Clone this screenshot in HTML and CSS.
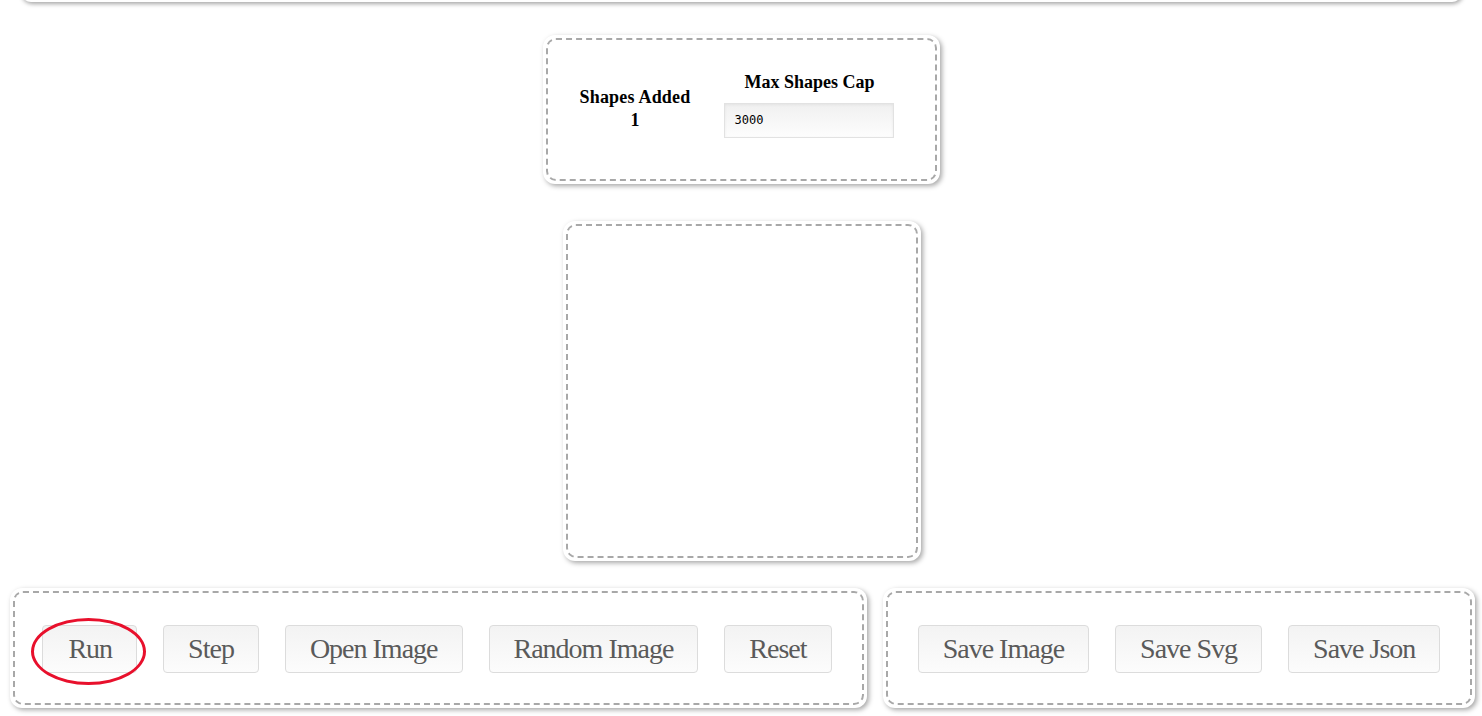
FILE: index.html
```html
<!DOCTYPE html>
<html>
<head>
<meta charset="utf-8">
<title>Shapes</title>
<link rel="stylesheet" href="styles.css">
</head>
<body>
<div class="top-panel"></div>

<div class="card stats-card">
  <div class="dash stats-inner">
    <div class="stat">
      <div class="stat-title">Shapes Added</div>
      <div class="stat-value">1</div>
    </div>
    <div class="stat cap">
      <div class="stat-title">Max Shapes Cap</div>
      <input class="cap-input" type="text" value="3000">
    </div>
  </div>
</div>

<div class="card canvas-card">
  <div class="dash canvas-inner"></div>
</div>

<div class="bottom-row">
  <div class="card controls-card">
    <div class="dash btn-row">
      <button class="btn run">Run</button>
      <button class="btn">Step</button>
      <button class="btn">Open Image</button>
      <button class="btn">Random Image</button>
      <button class="btn">Reset</button>
    </div>
  </div>
  <div class="card save-card">
    <div class="dash btn-row">
      <button class="btn">Save Image</button>
      <button class="btn">Save Svg</button>
      <button class="btn">Save Json</button>
    </div>
  </div>
</div>
</body>
</html>
```

FILE: styles.css
```css
html, body {
  margin: 0;
  padding: 0;
  background: #fff;
  overflow: hidden;
}

body {
  width: 1482px;
  height: 716px;
  font-family: "Liberation Serif", "Times New Roman", serif;
}

.top-panel {
  height: 40px;
  margin: -38px 20px 0 21px;
  background: #fff;
  border-radius: 10px;
  box-shadow: 1px 2px 4px rgba(0, 0, 0, 0.35);
}

.card {
  background: #fff;
  border-radius: 12px;
  padding: 3px;
  box-shadow: 2px 2px 5px rgba(0, 0, 0, 0.35);
  box-sizing: border-box;
}

.dash {
  border: 2px dashed #a8a8a8;
  border-radius: 10px;
  box-sizing: border-box;
  height: 100%;
}

.stats-card {
  width: 397px;
  height: 149px;
  margin: 33px auto 0;
}

.stats-inner {
  display: flex;
  align-items: center;
  padding-left: 32px;
  padding-bottom: 8px;
  gap: 34px;
}

.stat {
  display: flex;
  flex-direction: column;
  align-items: center;
  font-weight: bold;
  font-size: 18px;
  line-height: 23px;
  color: #000;
}

.stat:first-child {
  padding-top: 6px;
  letter-spacing: 0.2px;
}

.stat.cap {
  padding-bottom: 3px;
}

.stat-title {
  white-space: nowrap;
}

.cap-input {
  margin-top: 9px;
  width: 170px;
  height: 35px;
  box-sizing: border-box;
  border: 1px solid #e2e2e2;
  background: linear-gradient(#f0f0f0, #fdfdfd);
  box-shadow: inset 0 1px 3px rgba(0, 0, 0, 0.06);
  padding: 0 9px;
  font-family: "DejaVu Sans Mono", "Liberation Mono", monospace;
  font-size: 12px;
  color: #000;
  outline: none;
}

.canvas-card {
  width: 358px;
  height: 340px;
  margin: 37px auto 0;
  position: relative;
  left: 1px;
}

.bottom-row {
  display: flex;
  gap: 16px;
  padding-left: 10px;
  margin-top: 27px;
}

.controls-card {
  width: 857px;
  height: 120px;
}

.save-card {
  width: 592px;
  height: 120px;
}

.btn-row {
  display: flex;
  align-items: center;
  justify-content: center;
  gap: 26px;
  padding-top: 1px;
}

.controls-card .btn-row {
  padding-right: 3px;
}

.btn {
  height: 48px;
  padding: 0 24px;
  border: 1px solid #dcdcdc;
  border-radius: 4px;
  background: linear-gradient(#f3f3f3, #fcfcfc);
  font-family: "Liberation Serif", "Times New Roman", serif;
  font-size: 28px;
  letter-spacing: -1px;
  color: #5a5a5a;
  line-height: 46px;
  white-space: nowrap;
  cursor: pointer;
}

.run {
  position: relative;
  padding: 0 24px 0 25px;
}

.run::after {
  content: "";
  position: absolute;
  left: -12px;
  top: -8px;
  width: 115px;
  height: 67px;
  box-sizing: border-box;
  border: 3px solid #e8102c;
  border-radius: 50%;
  pointer-events: none;
}
```
